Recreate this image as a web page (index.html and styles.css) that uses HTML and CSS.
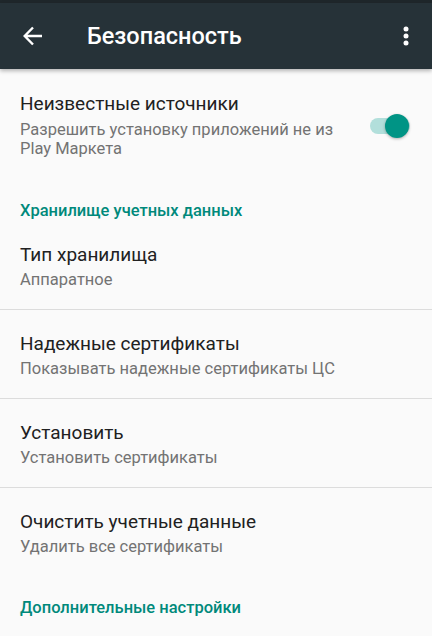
FILE: index.html
```html
<!DOCTYPE html>
<html lang="ru">
<head>
<meta charset="utf-8">
<title>Безопасность</title>
<link rel="stylesheet" href="styles.css">
</head>
<body>
<div class="statusbar"></div>
<header class="toolbar">
  <svg class="back" width="20" height="20" viewBox="0 0 20 20"><path d="M19 10H2M10 1.5L1.7 10L10 18.5" fill="none" stroke="#fff" stroke-width="2.4" stroke-linejoin="miter"/></svg>
  <h1 class="title">Безопасность</h1>
  <svg class="more" width="6" height="20" viewBox="0 0 6 20"><circle cx="3" cy="3" r="2.5" fill="#fff"/><circle cx="3" cy="10" r="2.5" fill="#fff"/><circle cx="3" cy="17" r="2.5" fill="#fff"/></svg>
</header>
<main class="list">
  <div class="item item-switch">
    <div class="texts">
      <div class="primary">Неизвестные источники</div>
      <div class="secondary">Разрешить установку приложений не из Play Маркета</div>
    </div>
    <div class="switch"><span class="track"></span><span class="thumb"></span></div>
  </div>
  <div class="category">Хранилище учетных данных</div>
  <div class="item divided">
    <div class="primary">Тип хранилища</div>
    <div class="secondary">Аппаратное</div>
  </div>
  <div class="item divided">
    <div class="primary">Надежные сертификаты</div>
    <div class="secondary">Показывать надежные сертификаты ЦС</div>
  </div>
  <div class="item divided">
    <div class="primary">Установить</div>
    <div class="secondary">Установить сертификаты</div>
  </div>
  <div class="item">
    <div class="primary">Очистить учетные данные</div>
    <div class="secondary">Удалить все сертификаты</div>
  </div>
  <div class="category category-last">Дополнительные настройки</div>
</main>
</body>
</html>
```
FILE: styles.css
```css
html, body {
  margin: 0;
  padding: 0;
}
body {
  background: #fafafa;
  font-family: Roboto, "Noto Sans", sans-serif;
  width: 432px;
  height: 636px;
  overflow: hidden;
}
.statusbar {
  height: 3px;
  background: #1f272b;
}
.toolbar {
  height: 66px;
  background: #263238;
  display: flex;
  align-items: center;
  box-shadow: 0 2px 4px rgba(0,0,0,0.28);
  position: relative;
  z-index: 1;
}
.back {
  margin-left: 23px;
  flex: none;
}
.title {
  margin: 0 0 0 44px;
  font-size: 23.5px;
  font-weight: 500;
  color: #fff;
  flex: 1;
}
.more {
  margin-right: 23px;
  flex: none;
}
.list {
  display: flex;
  flex-direction: column;
}
.item {
  padding: 22px 20px 20px 20px;
}
.item.divided {
  border-bottom: 1px solid #dcdcdc;
}
.item-switch {
  display: flex;
  align-items: center;
  padding-top: 23px;
  padding-right: 22px;
}
.texts {
  flex: 1;
  min-width: 0;
}
.primary {
  font-size: 19px;
  line-height: 24px;
  color: #212121;
}
.secondary {
  margin-top: 4px;
  font-size: 16.5px;
  line-height: 18px;
  color: #737373;
}
.item-switch .secondary {
  line-height: 19px;
}
.switch {
  position: relative;
  width: 40px;
  height: 24px;
  margin-left: 18px;
  margin-top: 2px;
  flex: none;
}
.track {
  position: absolute;
  left: 0;
  top: 4px;
  width: 40px;
  height: 16px;
  border-radius: 8px;
  background: #b2dfdb;
}
.thumb {
  position: absolute;
  right: 1px;
  top: 0;
  width: 24px;
  height: 24px;
  border-radius: 50%;
  background: #009485;
  box-shadow: 0 1px 3px rgba(0,0,0,0.3);
}
.category {
  padding: 23px 20px 0 20px;
  font-size: 16.5px;
  line-height: 20px;
  font-weight: 500;
  color: #00897b;
}
.category-last {
  padding-top: 22px;
}
```
